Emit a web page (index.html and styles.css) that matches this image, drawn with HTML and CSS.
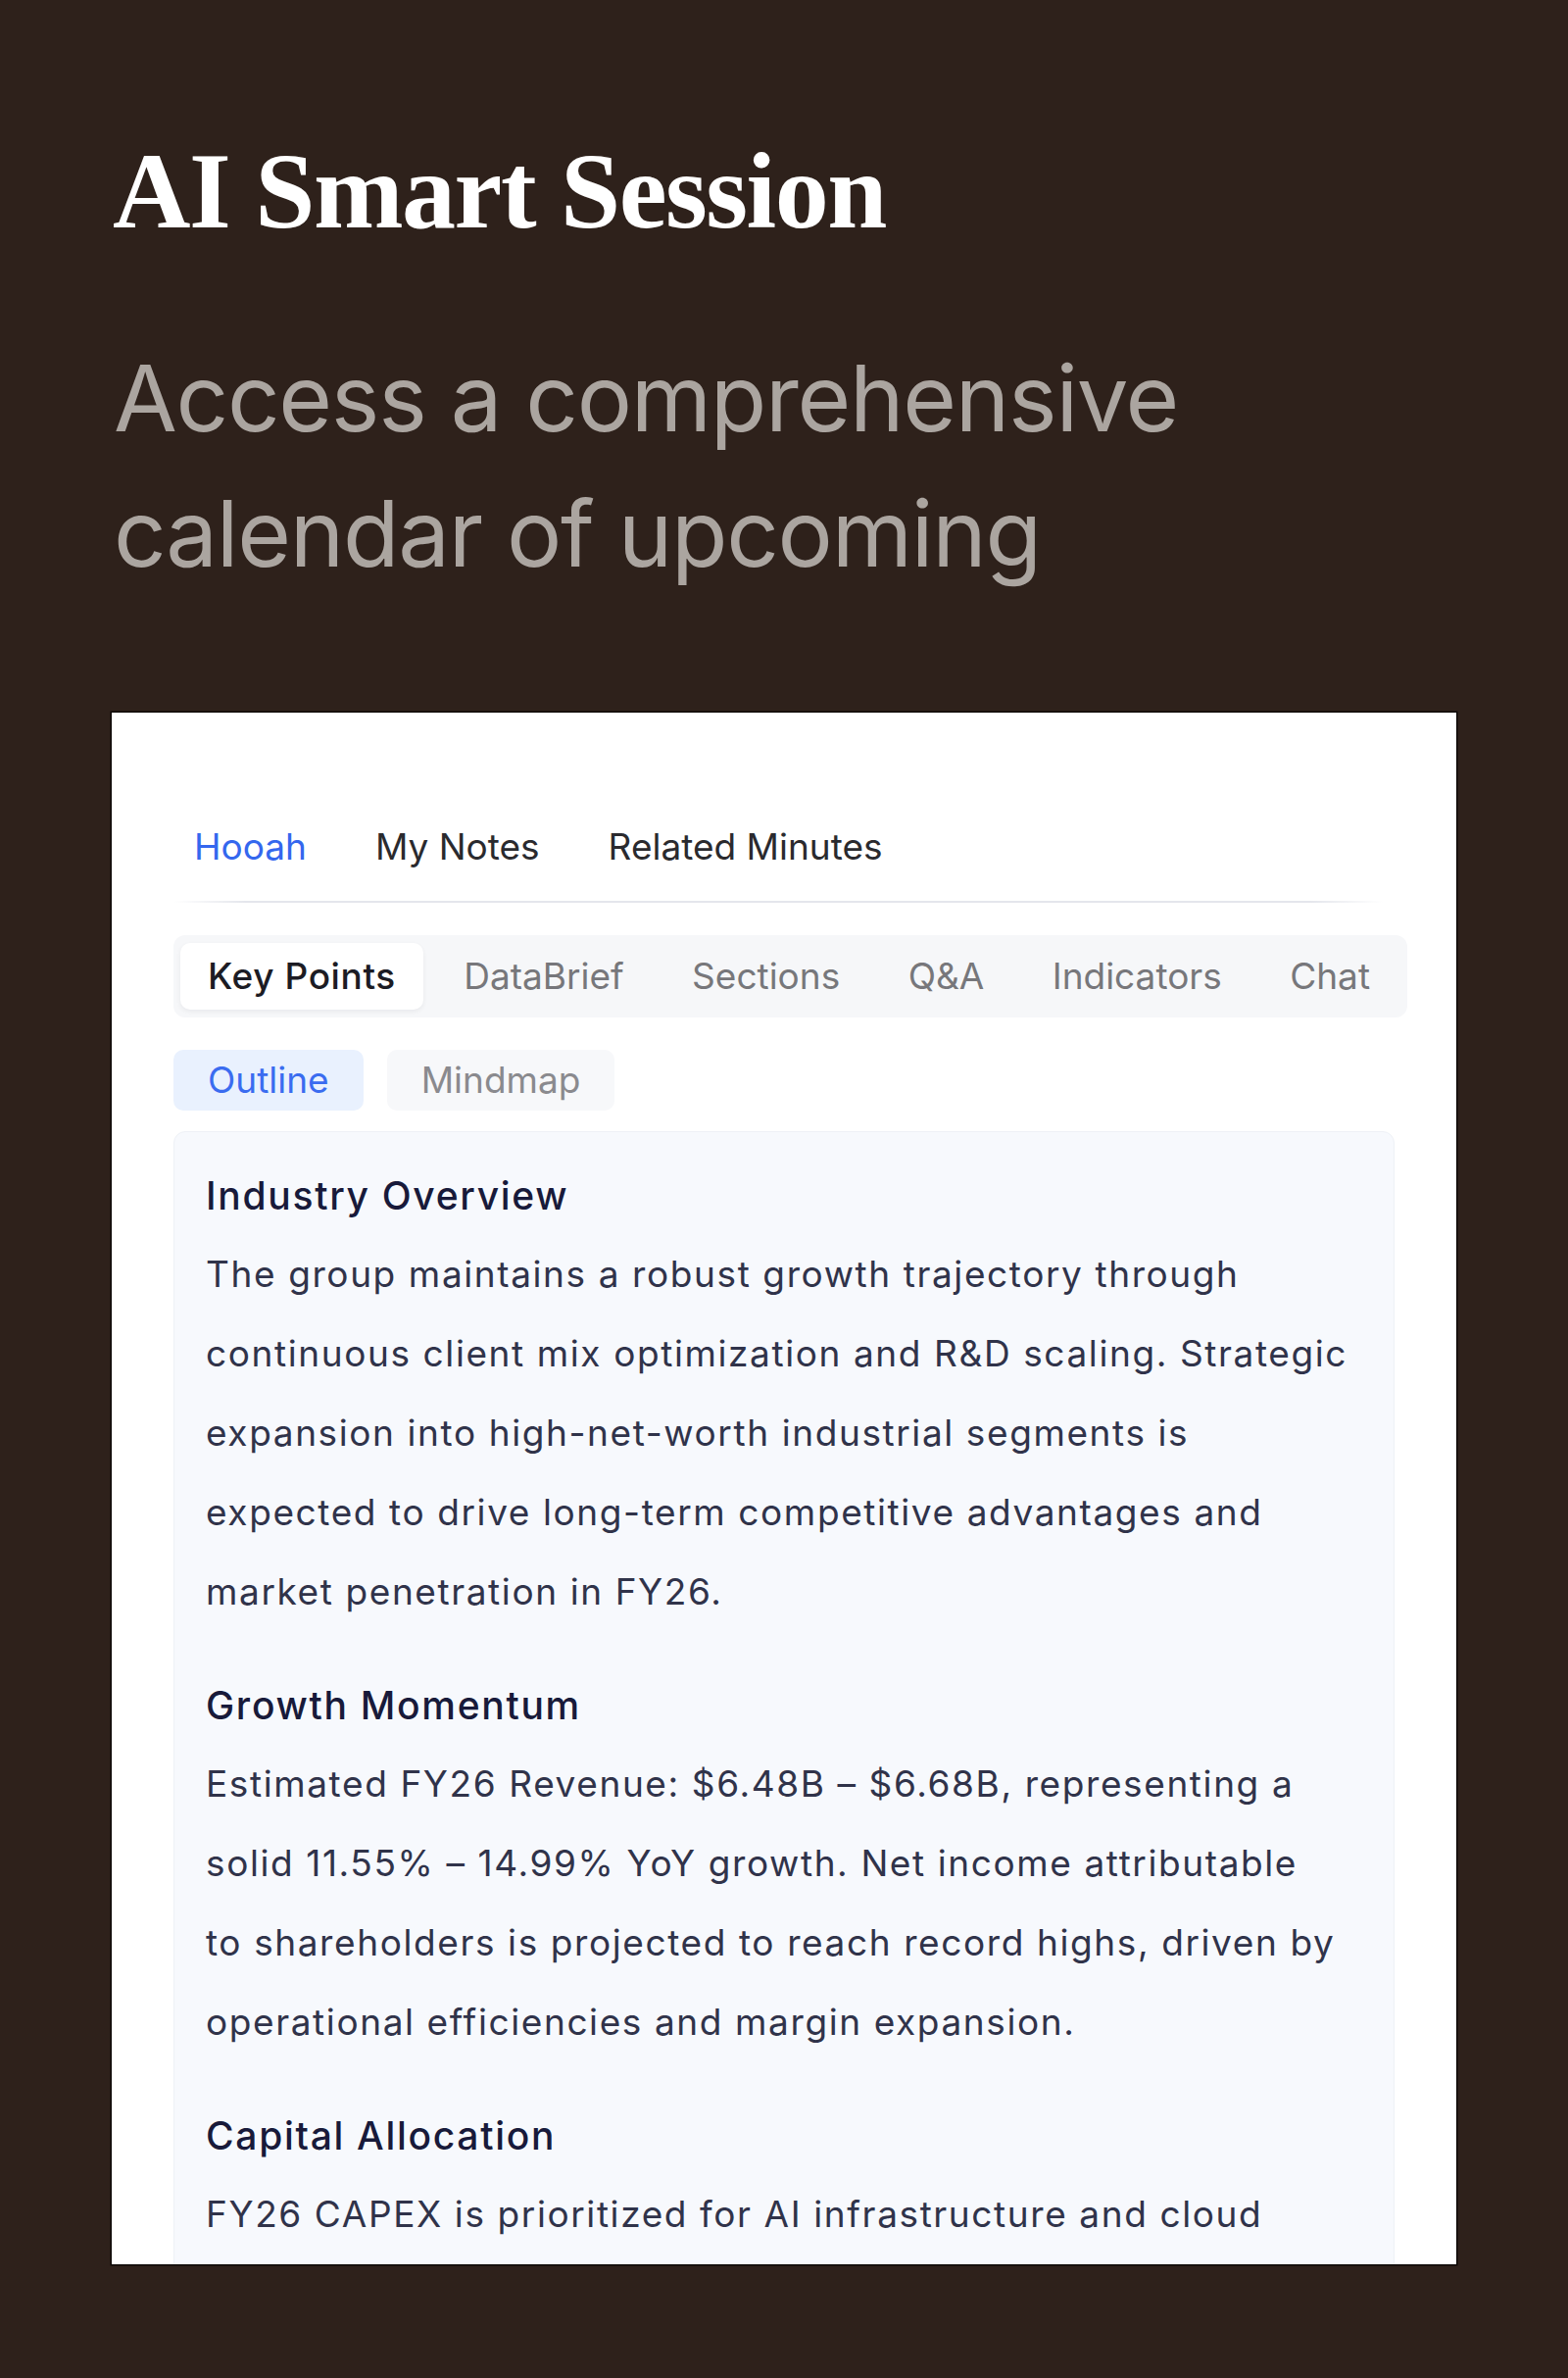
FILE: index.html
```html
<!DOCTYPE html>
<html lang="en">
<head>
<meta charset="utf-8">
<title>AI Smart Session</title>
<link rel="stylesheet" href="styles.css">
</head>
<body>
<div class="page">
  <header class="hero">
    <h1 class="hero-title">AI Smart Session</h1>
    <p class="hero-sub">Access a comprehensive<br>calendar of upcoming</p>
  </header>

  <section class="card">
    <nav class="top-tabs">
      <span class="top-tab is-active">Hooah</span>
      <span class="top-tab">My Notes</span>
      <span class="top-tab">Related Minutes</span>
    </nav>
    <div class="divider"></div>

    <div class="seg">
      <span class="seg-item is-active">Key Points</span>
      <span class="seg-item">DataBrief</span>
      <span class="seg-item">Sections</span>
      <span class="seg-item">Q&amp;A</span>
      <span class="seg-item">Indicators</span>
      <span class="seg-item">Chat</span>
    </div>

    <div class="chips">
      <span class="chip is-active">Outline</span>
      <span class="chip">Mindmap</span>
    </div>

    <div class="outline">
      <div class="sec">
        <h3 class="sec-title">Industry Overview</h3>
        <p class="sec-body">The group maintains a robust growth trajectory through<br>continuous client mix optimization and R&amp;D scaling. Strategic<br>expansion into high-net-worth industrial segments is<br>expected to drive long-term competitive advantages and<br>market penetration in FY26.</p>
      </div>
      <div class="sec">
        <h3 class="sec-title">Growth Momentum</h3>
        <p class="sec-body">Estimated FY26 Revenue: $6.48B – $6.68B, representing a<br>solid 11.55% – 14.99% YoY growth. Net income attributable<br>to shareholders is projected to reach record highs, driven by<br>operational efficiencies and margin expansion.</p>
      </div>
      <div class="sec">
        <h3 class="sec-title">Capital Allocation</h3>
        <p class="sec-body">FY26 CAPEX is prioritized for AI infrastructure and cloud</p>
      </div>
    </div>
  </section>
</div>
</body>
</html>
```

FILE: styles.css
```css
html, body {
  margin: 0;
  padding: 0;
  background: #2e211b;
}

.page {
  width: 1600px;
  height: 2426px;
  box-sizing: border-box;
  padding: 0 114px;
  overflow: hidden;
  font-family: "Inter", "Liberation Sans", sans-serif;
}

.hero-title {
  margin: 140px 0 0 1px;
  font-family: "Liberation Serif", "Times New Roman", serif;
  font-weight: 700;
  font-size: 110px;
  line-height: 110px;
  letter-spacing: -1.5px;
  color: #ffffff;
}

.hero-sub {
  margin: 87px 0 0 2px;
  font-size: 94px;
  line-height: 138px;
  font-weight: 400;
  color: #aba5a0;
  letter-spacing: -1.3px;
}

.card {
  margin-top: 114px;
  height: 1583px;
  box-sizing: border-box;
  background: #ffffff;
  box-shadow: 0 0 0 1.5px #0c0806;
  padding: 107px 50px 0 63px;
  overflow: hidden;
}

.top-tabs {
  display: flex;
  gap: 70px;
  padding-left: 21px;
  font-size: 37px;
  line-height: 60px;
}

.top-tab {
  color: #2a2a2e;
}

.top-tab.is-active {
  color: #3467ee;
}

.divider {
  margin: 25px 25px 0 0;
  height: 2px;
  background: linear-gradient(to right, rgba(228,230,236,0) 0%, #e4e6ec 6%, #e4e6ec 94%, rgba(228,230,236,0) 100%);
}

.seg {
  margin-top: 33px;
  display: flex;
  justify-content: space-between;
  padding: 8px 10px 8px 7px;
  background: #f6f7f9;
  border-radius: 12px;
}

.seg-item {
  padding: 0 28px;
  font-size: 37px;
  line-height: 68px;
  color: #77777b;
  border-radius: 10px;
}

.seg-item.is-active {
  background: #ffffff;
  color: #1c1c24;
  font-weight: 500;
  letter-spacing: 0.6px;
  box-shadow: 0 2px 5px rgba(20, 20, 40, 0.06);
}

.chips {
  margin-top: 33px;
  display: flex;
  gap: 24px;
}

.chip {
  padding: 0 35px;
  font-size: 37px;
  line-height: 62px;
  color: #8a8a8e;
  background: #f7f8fa;
  border-radius: 10px;
}

.chip.is-active {
  color: #3a6cf0;
  background: #e9f1fe;
}

.outline {
  margin: 21px 13px 0 0;
  padding: 37px 20px 0 32px;
  background: #f7f9fd;
  border: 1px solid #eef1f6;
  border-radius: 12px;
  height: 1400px;
  box-sizing: border-box;
}

.sec + .sec {
  margin-top: 48px;
}

.sec-title {
  margin: 0 0 11px 0;
  font-size: 39px;
  line-height: 56px;
  font-weight: 500;
  letter-spacing: 1.7px;
  color: #181a3a;
}

.sec-body {
  margin: 0;
  font-size: 37px;
  line-height: 81px;
  letter-spacing: 1.6px;
  color: #30334a;
  white-space: nowrap;
}
```
